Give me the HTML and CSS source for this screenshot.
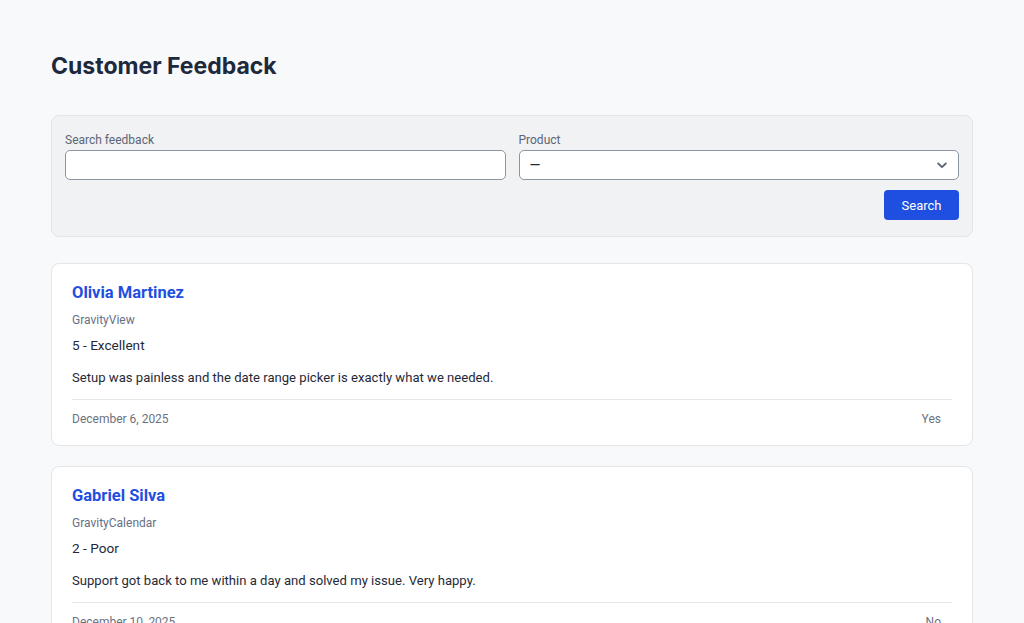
FILE: index.html
```html
<!DOCTYPE html>
<html lang="en">
<head>
<meta charset="utf-8">
<title>Customer Feedback</title>
<link rel="stylesheet" href="styles.css">
</head>
<body>
<main class="page">
  <h1 class="title">Customer Feedback</h1>
  <form class="filters">
    <div class="fields">
      <label class="field">
        <span class="label">Search feedback</span>
        <input class="input" type="text">
      </label>
      <label class="field">
        <span class="label">Product</span>
        <span class="select">
          <span class="select-value">—</span>
          <svg class="chev" width="10" height="7" viewBox="0 0 10 7"><path d="M1.2 1.5 5 5.2l3.8-3.7" fill="none" stroke="#5b6472" stroke-width="1.8" stroke-linecap="round" stroke-linejoin="round"/></svg>
        </span>
      </label>
    </div>
    <div class="actions">
      <button class="btn" type="button">Search</button>
    </div>
  </form>

  <section class="list">
    <article class="card">
      <h2 class="name">Olivia Martinez</h2>
      <div class="product">GravityView</div>
      <div class="rating">5 - Excellent</div>
      <p class="text">Setup was painless and the date range picker is exactly what we needed.</p>
      <div class="foot">
        <span>December 6, 2025</span>
        <span>Yes</span>
      </div>
    </article>
    <article class="card">
      <h2 class="name">Gabriel Silva</h2>
      <div class="product">GravityCalendar</div>
      <div class="rating">2 - Poor</div>
      <p class="text">Support got back to me within a day and solved my issue. Very happy.</p>
      <div class="foot">
        <span>December 10, 2025</span>
        <span>No</span>
      </div>
    </article>
  </section>
</main>
</body>
</html>
```

FILE: styles.css
```css
* { box-sizing: border-box; }
html, body { margin: 0; padding: 0; }
body {
  background: #f8f9fb;
  font-family: Roboto, "Liberation Sans", sans-serif;
  color: #1f2937;
}
.page {
  max-width: 922px;
  margin: 0 auto;
  padding-top: 50px;
}
.title {
  margin: 0 0 33px;
  font-family: Inter, Roboto, sans-serif;
  font-size: 23px;
  line-height: 32px;
  font-weight: 700;
  color: #1e293b;
}
.filters {
  background: #f1f2f4;
  border: 1px solid #e3e5e9;
  border-radius: 8px;
  padding: 16px 13px 16px 13px;
}
.fields {
  display: grid;
  grid-template-columns: 1fr 1fr;
  gap: 13px;
}
.field { display: flex; flex-direction: column; }
.label {
  font-size: 12px;
  line-height: 16px;
  color: #5b6577;
  margin-bottom: 2px;
}
.input, .select {
  height: 30px;
  background: #fff;
  border: 1px solid #8c95a3;
  border-radius: 5px;
  font: inherit;
}
.select {
  display: flex;
  align-items: center;
  justify-content: space-between;
  padding: 0 11px 0 10px;
  font-size: 14px;
  color: #1f2937;
}
.chev { display: block; }
.actions {
  display: flex;
  justify-content: flex-end;
  margin-top: 10px;
}
.btn {
  height: 30px;
  width: 75px;
  border: 0;
  border-radius: 4px;
  background: #1f4fe0;
  color: #fff;
  font: inherit;
  font-size: 13px;
}
.list {
  margin-top: 26px;
  display: flex;
  flex-direction: column;
  gap: 20px;
}
.card {
  background: #fff;
  border: 1px solid #e3e5e9;
  border-radius: 8px;
  padding: 19px 20px 18px 20px;
}
.name {
  margin: 0;
  font-size: 16.5px;
  line-height: 20px;
  font-weight: 700;
  color: #1f4fe0;
}
.product {
  margin-top: 9px;
  font-size: 12px;
  line-height: 16px;
  color: #667085;
}
.rating {
  margin-top: 7px;
  font-size: 13.6px;
  line-height: 20px;
  color: #1f2937;
}
.text {
  margin: 13px 0 0;
  font-size: 13.1px;
  line-height: 20px;
  color: #1f2937;
}
.foot {
  margin-top: 11px;
  border-top: 1px solid #e5e7eb;
  padding: 11px 11px 0 0;
  display: flex;
  justify-content: space-between;
  font-size: 12px;
  line-height: 16px;
  color: #6b7280;
}
```
